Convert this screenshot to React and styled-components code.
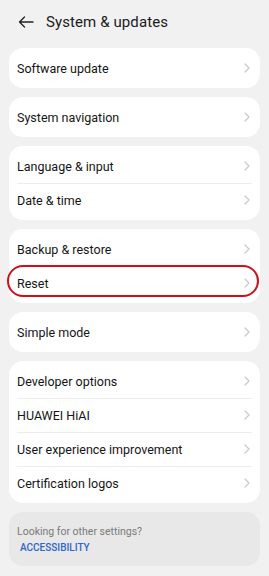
import React from 'react';
import styled, {createGlobalStyle} from 'styled-components';

const GlobalStyle = createGlobalStyle`
    html, body {
        margin: 0;
        padding: 0;
        background: #f1f1f1;
    }
    body {
        font-family: 'Roboto', 'Noto Sans', sans-serif;
        -webkit-font-smoothing: antialiased;
    }
`;

const Page = styled.div`
    width: 269px;
    height: 576px;
    background: #f1f1f1;
    overflow: hidden;
`;

const Header = styled.div`
    display: flex;
    align-items: center;
    height: 44px;
    padding-left: 18px;
    gap: 12px;
`;

const Title = styled.h1`
    margin: 0;
    font-size: 15px;
    font-weight: 400;
    color: #1b1b1b;
    letter-spacing: 0.1px;
`;

const List = styled.div`
    display: flex;
    flex-direction: column;
    gap: 9px;
    padding: 4px 9px 0;
`;

const Card = styled.div`
    background: #ffffff;
    border-radius: 14px;
    padding: 3px 0;
`;

const Row = styled.div`
    position: relative;
    display: flex;
    align-items: center;
    justify-content: space-between;
    height: 34px;
    padding: 0 10px 0 8px;
    &:not(:first-child)::before {
        content: '';
        position: absolute;
        top: 0;
        left: 8px;
        right: 8px;
        height: 1px;
        background: #ededed;
    }
`;

const Label = styled.span`
    font-size: 12.5px;
    color: #151515;
`;

const Mark = styled.div`
    position: absolute;
    top: -1px;
    bottom: 3px;
    left: -2px;
    right: 1px;
    border: 2.5px solid #d10f1c;
    border-radius: 18px;
    pointer-events: none;
`;

const Hint = styled.div`
    background: #e8e8e8;
    border-radius: 14px;
    padding: 13px 8px 13px;
    display: flex;
    flex-direction: column;
    gap: 4px;
`;

const HintText = styled.span`
    font-size: 10.5px;
    color: #7a7a7a;
`;

const HintLink = styled.span`
    font-size: 10px;
    font-weight: 500;
    color: #2f64c8;
    padding-left: 3px;
`;

const Chevron = () => (
    <svg width="6" height="10" viewBox="0 0 6 10">
        <path d="M1 1 L5 5 L1 9" fill="none" stroke="#c9c9c9" strokeWidth="1.2" strokeLinecap="round" strokeLinejoin="round"/>
    </svg>
);

const BackArrow = () => (
    <svg width="16" height="12" viewBox="0 0 16 12">
        <path d="M15 6 H1.5 M6.5 1 L1.5 6 L6.5 11" fill="none" stroke="#222" strokeWidth="1.3" strokeLinecap="round" strokeLinejoin="round"/>
    </svg>
);

const groups = [
    [{label: 'Software update'}],
    [{label: 'System navigation'}],
    [{label: 'Language & input'}, {label: 'Date & time'}],
    [{label: 'Backup & restore'}, {label: 'Reset', marked: true}],
    [{label: 'Simple mode'}],
    [
        {label: 'Developer options'},
        {label: 'HUAWEI HiAI'},
        {label: 'User experience improvement'},
        {label: 'Certification logos'},
    ],
];

export default function App() {
    return (
        <Page>
            <GlobalStyle/>
            <Header>
                <BackArrow/>
                <Title>System &amp; updates</Title>
            </Header>
            <List>
                {groups.map((group, i) => (
                    <Card key={i}>
                        {group.map((item) => (
                            <Row key={item.label}>
                                <Label>{item.label}</Label>
                                <Chevron/>
                                {item.marked && <Mark/>}
                            </Row>
                        ))}
                    </Card>
                ))}
                <Hint>
                    <HintText>Looking for other settings?</HintText>
                    <HintLink>ACCESSIBILITY</HintLink>
                </Hint>
            </List>
        </Page>
    );
}
